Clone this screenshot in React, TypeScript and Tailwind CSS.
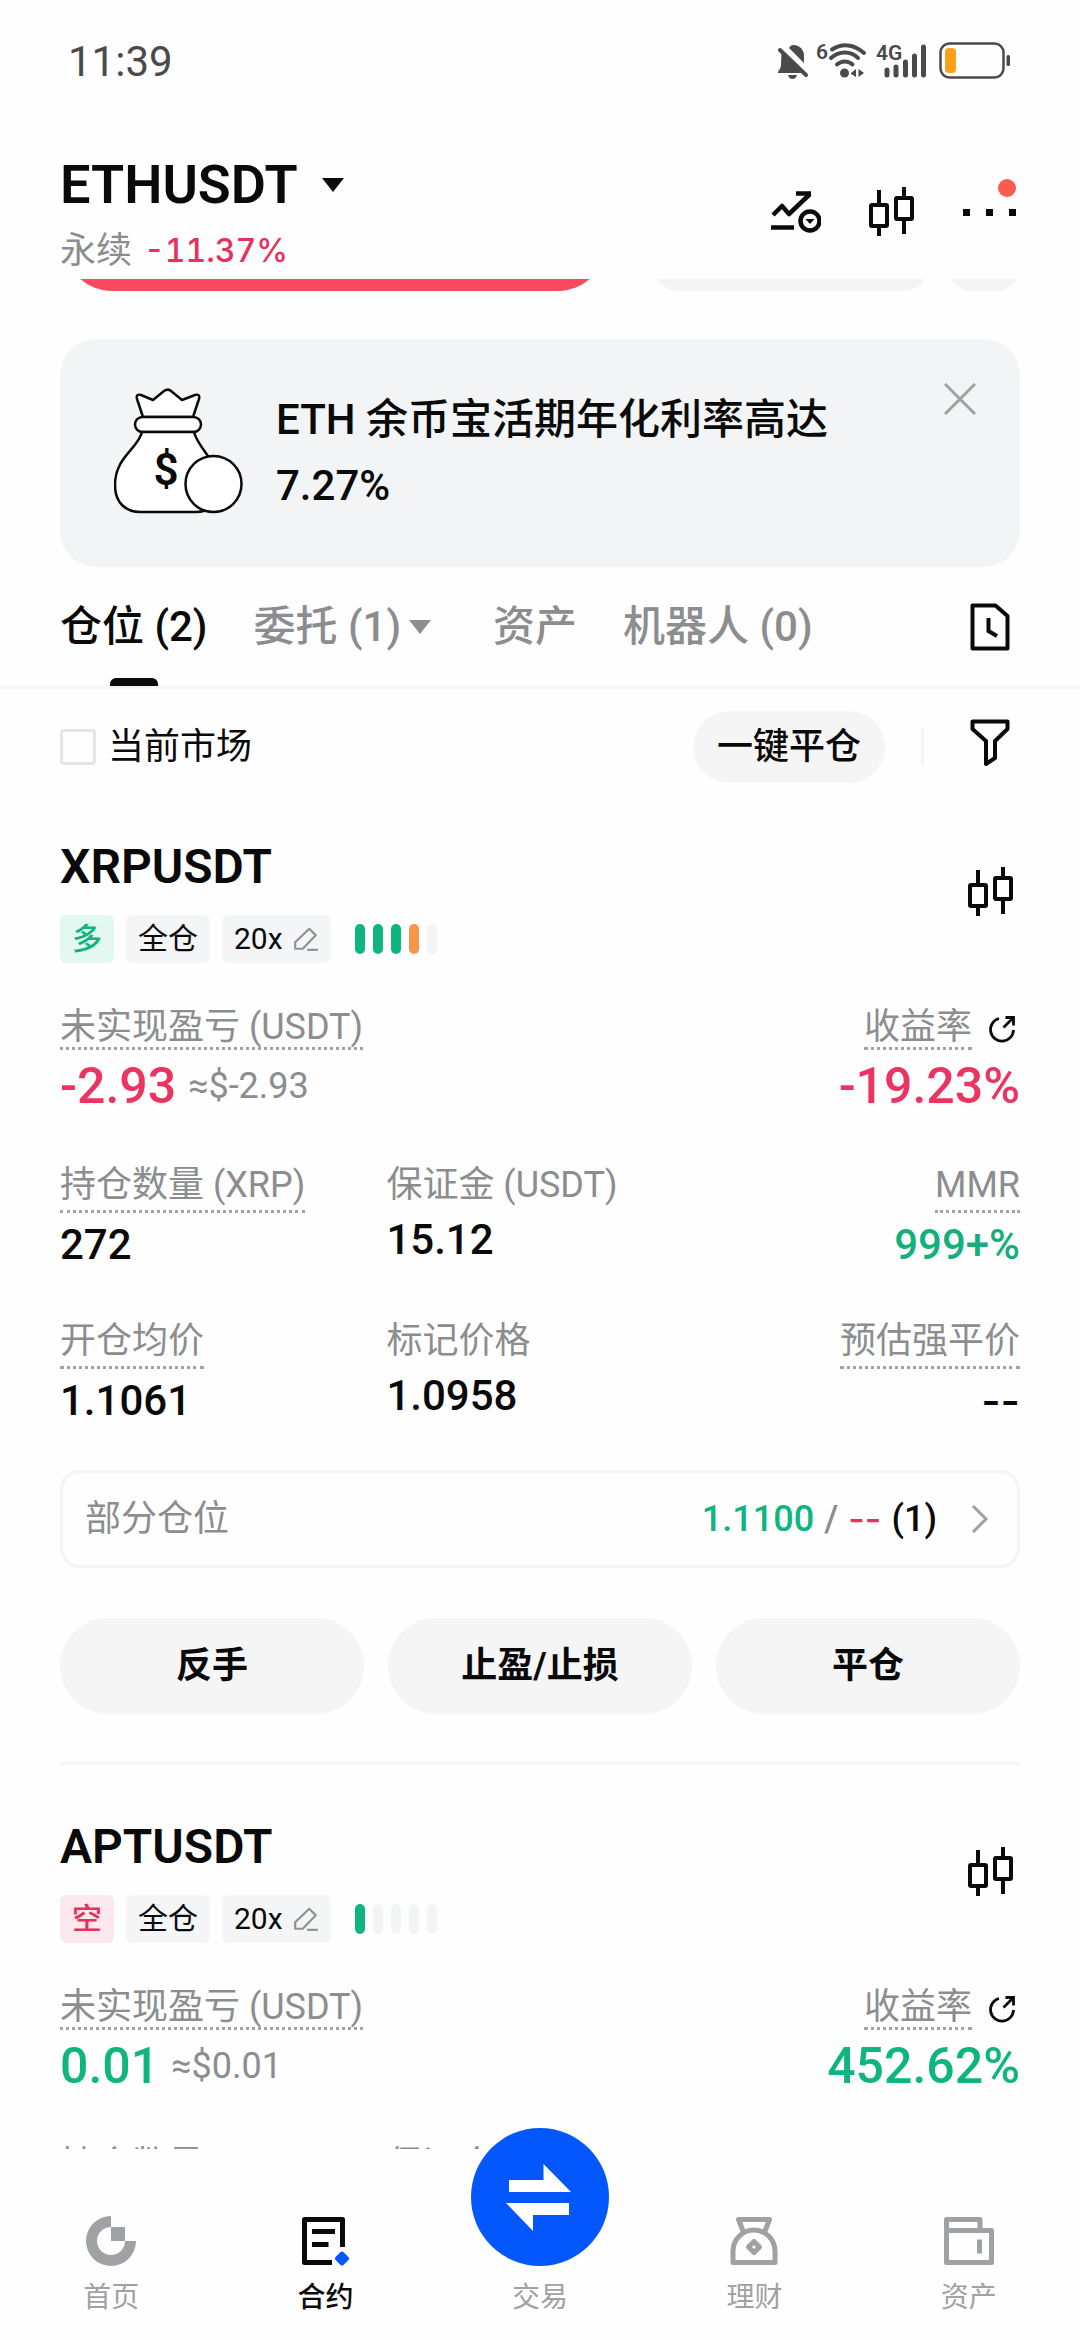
import type { ReactNode } from 'react';

interface Field {
  label: string;
  value: string;
  underlined?: boolean;
  valueClass?: string;
}

interface Position {
  symbol: string;
  side: '多' | '空';
  risk: string[];
  pnl: string;
  pnlUsd: string;
  roe: string;
  up: boolean;
  fields: Field[];
}

const positions: Position[] = [
  {
    symbol: 'XRPUSDT',
    side: '多',
    risk: ['bg-[#0fb57e]', 'bg-[#0fb57e]', 'bg-[#0fb57e]', 'bg-[#f79548]', 'bg-[#f3f4f5]'],
    pnl: '-2.93',
    pnlUsd: '≈$-2.93',
    roe: '-19.23%',
    up: false,
    fields: [
      { label: '持仓数量 (XRP)', value: '272', underlined: true },
      { label: '保证金 (USDT)', value: '15.12' },
      { label: 'MMR', value: '999+%', underlined: true, valueClass: 'text-[#13b07c]' },
      { label: '开仓均价', value: '1.1061', underlined: true },
      { label: '标记价格', value: '1.0958' },
      { label: '预估强平价', value: '--', underlined: true, valueClass: "font-['Inter',sans-serif]" },
    ],
  },
  {
    symbol: 'APTUSDT',
    side: '空',
    risk: ['bg-[#0fb57e]', 'bg-[#f3f4f5]', 'bg-[#f3f4f5]', 'bg-[#f3f4f5]', 'bg-[#f3f4f5]'],
    pnl: '0.01',
    pnlUsd: '≈$0.01',
    roe: '452.62%',
    up: true,
    fields: [
      { label: '持仓数量', value: '1', underlined: true },
      { label: '保证金', value: '0.01' },
    ],
  },
];

/* ---------- icons ---------- */

function CandleIcon() {
  return (
    <svg width="46" height="50" viewBox="0 0 46 50" fill="none" stroke="currentColor" strokeWidth="4">
      <rect x="2" y="18" width="16" height="21" rx="1" />
      <path d="M10 3V18M10 39V49" />
      <rect x="27" y="11" width="16" height="21" rx="1" />
      <path d="M35 0V11M35 32V47" />
    </svg>
  );
}

function TrendIcon() {
  return (
    <svg width="50" height="42" viewBox="0 0 50 42" fill="none" stroke="currentColor" strokeWidth="4.500">
      <path d="M2 24L11 15L18 23L39 3" strokeLinejoin="round" />
      <path d="M25 2.5H40" />
      <path d="M0 36.5H23" />
      <circle cx="39" cy="30" r="9.5" />
      <path d="M34.5 28H43.5L39 33Z" fill="currentColor" stroke="none" />
    </svg>
  );
}

function CaretIcon() {
  return (
    <svg width="22" height="16" viewBox="0 0 22 16" fill="currentColor">
      <path d="M0 1H22L11 15Z" />
    </svg>
  );
}

function BagIllustration() {
  return (
    <svg width="130" height="128" viewBox="0 0 130 128" fill="#fff" stroke="#0a0a0a" strokeWidth="2.5" strokeLinejoin="round">
      <path d="M29 30L23 12C22 8 24 7 27 8L39 13L50 4C53 2 55 2 57 4L68 13L81 8C84 7 86 8 85 12L79 30Z" />
      <rect x="21" y="30" width="66" height="15" rx="7.5" />
      <path d="M28 45C24 62 1 70 1 98C1 116 12 125 26 125H82C94 125 106 118 106 98C106 76 84 62 80 45Z" />
      <circle cx="99.500" cy="97" r="28" />
      <text x="52" y="98" textAnchor="middle" fontSize="44" fontWeight="600" fill="#0a0a0a" stroke="none" fontFamily="Roboto, sans-serif">$</text>
    </svg>
  );
}

function HistoryIcon() {
  return (
    <svg width="40" height="48" viewBox="0 0 40 48" fill="none" stroke="currentColor" strokeWidth="4" strokeLinejoin="round">
      <path d="M2.500 2.500H25.500L37.500 13V45.500H2.500Z" />
      <path d="M18.500 15V28L27 33" strokeLinejoin="miter" />
    </svg>
  );
}

function FunnelIcon() {
  return (
    <svg width="40" height="48" viewBox="0 0 40 48" fill="none" stroke="currentColor" strokeWidth="4" strokeLinejoin="round">
      <path d="M2.500 2.500H37.500V10L25 22V39L16 45V22L2.500 10Z" />
    </svg>
  );
}

function PencilIcon() {
  return (
    <svg width="26" height="26" viewBox="0 0 24 24" fill="none" stroke="#8f9193" strokeWidth="2" strokeLinejoin="round">
      <path d="M15 2.500L21 8.500L9 21H2V15Z" />
      <path d="M13 22H23" />
    </svg>
  );
}

function ShareIcon() {
  return (
    <svg width="28" height="28" viewBox="0 0 28 28" fill="none" stroke="currentColor" strokeWidth="2.800">
      <path d="M11 3.500A11.500 11.500 0 1 0 25.500 15" />
      <path d="M17.500 2.500H25.500V10.500M25 3L15.500 12.500" />
    </svg>
  );
}

function StatusIcons() {
  return (
    <div className="flex items-center gap-[9px] text-[#4a4a4a]">
      <svg width="32" height="38" viewBox="0 0 32 38" fill="currentColor">
        <path d="M12 6C13 4 14.500 3 16.500 3C23 3 27 8 27 14V21Z" />
        <path d="M4.500 10L27 31H1C1 28 4 27 4 23Z" />
        <path d="M3 8L29 33" stroke="currentColor" strokeWidth="4" strokeLinecap="round" />
        <path d="M11 33H20C19 36 17.500 37 15.500 37S12 36 11 33Z" />
      </svg>
      <svg className="overflow-visible" width="50" height="38" viewBox="0 0 50 38" fill="none" stroke="currentColor" strokeWidth="4" strokeLinecap="round">
        <text x="-2" y="17" fontSize="21" fontWeight="600" fill="currentColor" stroke="none" fontFamily="Roboto, sans-serif">6</text>
        <path d="M14 7.500C24 1 36 2 46 11" />
        <path d="M13 16C21 8.500 33 8.500 40 16" />
        <path d="M19 22.500C23.500 18.500 30 18.500 34.500 22.500" />
        <circle cx="26.500" cy="31" r="4.500" fill="currentColor" stroke="none" />
        <path d="M38 27V35L32.500 31.500ZM40.500 35V27L46 31Z" fill="currentColor" stroke="none" />
      </svg>
      <svg className="overflow-visible" width="50" height="38" viewBox="0 0 50 38" fill="none" stroke="currentColor" strokeWidth="5" strokeLinecap="round">
        <text x="-1" y="18" fontSize="21" fontWeight="600" fill="currentColor" stroke="none" fontFamily="Roboto, sans-serif">4G</text>
        <path d="M10 28V33M19 25V33M28.500 20V33M37.500 14V33M46.500 5V33" />
      </svg>
      <svg width="74" height="40" viewBox="0 0 74 40" fill="none">
        <rect x="4.500" y="2.500" width="63" height="34" rx="9" stroke="currentColor" strokeWidth="2.500" />
        <rect x="9" y="7" width="11" height="25" rx="4" fill="#ff9f1a" />
        <rect x="70.500" y="14" width="3.500" height="11" rx="1.500" fill="currentColor" />
      </svg>
    </div>
  );
}

function HomeIcon() {
  return (
    <svg width="50" height="50" viewBox="0 0 50 50" fill="currentColor">
      <path d="M25 0A25 25 0 1 0 50 25H39A14 14 0 1 1 25 11Z" />
      <rect x="25" y="11" width="14" height="14" />
    </svg>
  );
}

function ContractIcon() {
  return (
    <svg width="50" height="50" viewBox="0 0 50 50" fill="none" stroke="currentColor" strokeWidth="5" strokeLinejoin="round">
      <path d="M31 46.500H3.500V3.500H41.500V31" />
      <path d="M11 15.500H34M11 28.500H27.500" />
      <path d="M41 37.500L46 42.500L41 47.500L36 42.500Z" fill="#0457fd" stroke="#0457fd" strokeWidth="4" />
    </svg>
  );
}

function EarnIcon() {
  return (
    <svg width="50" height="50" viewBox="0 0 50 50" fill="none" stroke="currentColor" strokeWidth="5" strokeLinejoin="round">
      <path d="M14 15L9.500 3.500H40.500L36 15" />
      <path d="M4 46.500V35A21 21 0 0 1 46 35V46.500Z" />
      <path d="M25 25.500L30.500 31L25 36.500L19.500 31Z" />
    </svg>
  );
}

function WalletIcon() {
  return (
    <svg width="50" height="50" viewBox="0 0 50 50" fill="none" stroke="currentColor" strokeWidth="5" strokeLinejoin="round">
      <path d="M2.500 14.500H47.500V46.500H2.500Z" />
      <path d="M2.500 14.500V3.500H36V14.500" />
      <path d="M35.500 23.500V37.500" />
    </svg>
  );
}

/* ---------- pieces ---------- */

function Stat({ label, value, underlined, valueClass = '', end }: Field & { end: boolean }) {
  return (
    <div className={`flex flex-col ${end ? 'items-end' : 'items-start'}`}>
      <span
        className={
          underlined
            ? 'border-b-[3px] border-dotted border-[#a0a2a4] pb-[5px] text-4xl leading-10 text-[#8b8d8f]'
            : 'pb-[3px] text-4xl leading-10 text-[#8b8d8f]'
        }
      >
        {label}
      </span>
      <span className={`mt-2 text-[42px] leading-12 font-medium ${valueClass}`}>{value}</span>
    </div>
  );
}

function PositionCard({ position, children }: { position: Position; children?: ReactNode }) {
  const tone = position.up ? 'text-[#0fb57e]' : 'text-[#ec3460]';
  const sideClass = position.side === '多' ? 'bg-[#e2f8f0] text-[#0fb57e]' : 'bg-[#fde8ed] text-[#e8305c]';

  return (
    <section className="px-15 pt-13">
      <div className="flex items-center justify-between">
        <div>
          <h2 className="text-5xl leading-[60px] font-semibold">{position.symbol}</h2>
          <div className="mt-[18px] flex items-center gap-3 text-[30px] leading-12">
            <span className={`rounded-md px-3 font-medium ${sideClass}`}>{position.side}</span>
            <span className="rounded-md bg-[#f4f5f6] px-3">全仓</span>
            <button className="flex items-center gap-[10px] rounded-md bg-[#f4f5f6] px-3">
              20x <PencilIcon />
            </button>
            <div className="ml-3 flex gap-2">
              {position.risk.map((color, i) => (
                <span key={i} className={`h-[30px] w-[10px] rounded-full ${color}`} />
              ))}
            </div>
          </div>
        </div>
        <button className="mr-[6px] pb-4">
          <CandleIcon />
        </button>
      </div>

      <div className="mt-11 flex justify-between">
        <div className="flex flex-col items-start">
          <span className="border-b-[3px] border-dotted border-[#a0a2a4] text-4xl leading-10 text-[#8b8d8f]">未实现盈亏 (USDT)</span>
          <div className="mt-[6px] flex items-center gap-3 leading-[60px]">
            <span className={`text-[50px] font-medium ${tone}`}>{position.pnl}</span>
            <span className="text-4xl leading-[60px] text-[#8b8d8f]">{position.pnlUsd}</span>
          </div>
        </div>
        <div className="flex flex-col items-end">
          <div className="flex items-center gap-4">
            <span className="border-b-[3px] border-dotted border-[#a0a2a4] text-4xl leading-10 text-[#8b8d8f]">收益率</span>
            <button className="mr-1">
              <ShareIcon />
            </button>
          </div>
          <span className={`mt-[6px] text-[50px] leading-[60px] font-medium ${tone}`}>{position.roe}</span>
        </div>
      </div>

      <div className="mt-[49px] grid grid-cols-[34fr_33fr_33fr] gap-y-13">
        {position.fields.map((field, i) => (
          <Stat key={field.label} {...field} end={i % 3 === 2} />
        ))}
      </div>
      {children}
    </section>
  );
}

function NavItem({ icon, label, active }: { icon: ReactNode; label: string; active?: boolean }) {
  return (
    <button
      className={`flex flex-1 flex-col items-center justify-end gap-4 text-[28px] leading-8 ${
        active ? 'font-medium text-[#0a0a0a]' : 'text-[#9fa1a4]'
      }`}
    >
      {icon}
      {label}
    </button>
  );
}

export default function App() {
  return (
    <div className="flex h-screen flex-col bg-[#fefefe] font-['Roboto','Noto_Sans_CJK_SC',sans-serif] text-[#0a0a0a]">
      <header className="shrink-0 pb-1">
        <div className="flex h-[122px] items-center justify-between pr-[70px] pl-[68px]">
          <span className="text-[42px] text-[#4a4a4a]">11:39</span>
          <StatusIcons />
        </div>
        <div className="mt-[31px] flex items-center justify-between px-15">
          <div>
            <button className="flex items-center gap-6 text-[54px] leading-16 font-semibold">
              ETHUSDT
              <CaretIcon />
            </button>
            <p className="mt-[10px] flex items-center gap-3 text-4xl leading-12 text-[#8b8d8f]">
              永续
              <span className="font-['Inter',sans-serif] text-[32px] font-medium text-[#e8305c] tabular-nums">-11.37%</span>
            </p>
          </div>
          <div className="flex items-center gap-12 pb-1">
            <button>
              <TrendIcon />
            </button>
            <button>
              <CandleIcon />
            </button>
            <button className="relative flex gap-4 pr-1">
              <span className="size-[7px] bg-current" />
              <span className="size-[7px] bg-current" />
              <span className="size-[7px] bg-current" />
              <span className="absolute -top-[30px] right-1 size-[18px] rounded-full bg-[#f75d50]" />
            </button>
          </div>
        </div>
      </header>

      <main className="min-h-0 flex-1 overflow-hidden">
        {/* order form, scrolled almost out of view */}
        <div className="-mt-21 flex px-15">
          <div className="ml-1 h-24 flex-1 rounded-full bg-[#f9495f]" />
          <div className="ml-12 h-24 w-[274px] rounded-3xl bg-[#f3f4f5]" />
          <div className="ml-5 h-24 w-[72px] rounded-3xl bg-[#f3f4f5]" />
        </div>

        <div className="mx-15 mt-12 flex items-start rounded-[36px] bg-[#f2f4f5] py-12 pr-11 pl-[54px]">
          <BagIllustration />
          <p className="ml-8 flex-1 pr-20 text-[42px] leading-[66px] font-medium">
            ETH 余币宝活期年化利率高达
            <br />
            7.27%
          </p>
          <button className="-mt-1">
            <svg width="32" height="32" viewBox="0 0 32 32" stroke="#9fa1a4" strokeWidth="3">
              <path d="M1 1L31 31M31 1L1 31" />
            </svg>
          </button>
        </div>

        <div className="flex h-[122px] justify-between border-b-[3px] border-[#f4f5f6] px-15">
          <nav className="flex gap-[46px] text-[42px] font-medium text-[#8b8d8f]">
            <button className="relative text-[#0a0a0a]">
              仓位 (2)
              <span className="absolute bottom-0 left-1/2 h-2 w-12 -translate-x-1/2 rounded-t-md bg-[#0a0a0a]" />
            </button>
            <button className="flex items-center gap-2 pr-4">
              委托 (1)
              <CaretIcon />
            </button>
            <button>资产</button>
            <button>机器人 (0)</button>
          </nav>
          <button className="mr-[10px]">
            <HistoryIcon />
          </button>
        </div>

        <div className="flex items-center justify-between px-15 pt-[22px] pb-0.5">
          <label className="flex items-center gap-3 text-4xl">
            <input type="checkbox" className="size-9 appearance-none rounded-sm border-[3px] border-[#e4e5e6]" />
            当前市场
          </label>
          <div className="flex items-center">
            <button className="h-18 rounded-full bg-[#f5f5f5] px-6 text-4xl font-medium">一键平仓</button>
            <span className="mr-[46px] ml-9 h-9 w-[3px] bg-[#f3f4f5]" />
            <button className="mr-[10px] pb-2">
              <FunnelIcon />
            </button>
          </div>
        </div>

        <PositionCard position={positions[0]}>
          <button className="mt-[45px] flex h-[98px] w-full items-center justify-between rounded-[20px] border-[3px] border-[#f3f4f5] pr-7 pl-[22px] text-4xl">
            <span className="text-[#8b8d8f]">部分仓位</span>
            <span className="flex items-center gap-[10px] font-medium">
              <span className="text-[#0fb57e]">1.1100</span>
              <span className="text-[#8b8d8f]">/</span>
              <span className="font-['Inter',sans-serif] text-[#e8305c]">--</span>
              <span>(1)</span>
              <svg className="ml-6" width="18" height="28" viewBox="0 0 18 28" fill="none" stroke="#9fa1a4" strokeWidth="3">
                <path d="M2 1L15 14L2 27" />
              </svg>
            </span>
          </button>
          <div className="mt-[50px] grid grid-cols-3 gap-6 border-b-[3px] border-[#f4f5f6] pb-12 text-4xl font-bold">
            <button className="h-24 rounded-full bg-[#f5f5f5]">反手</button>
            <button className="h-24 rounded-full bg-[#f5f5f5]">止盈/止损</button>
            <button className="h-24 rounded-full bg-[#f5f5f5]">平仓</button>
          </div>
        </PositionCard>

        <PositionCard position={positions[1]} />
      </main>

      <nav className="relative flex h-[191px] shrink-0 bg-[#fefefe] px-1 pb-[26px]">
        <NavItem icon={<HomeIcon />} label="首页" />
        <NavItem icon={<ContractIcon />} label="合约" active />
        <NavItem
          icon={
            <svg className="shrink-0" width="138" height="138" viewBox="0 0 138 138">
              <circle cx="69" cy="69" r="69" fill="#0457fd" />
              <path d="M38 52H72.500V36L100 64H38ZM98 75H35L62 103V87H98Z" fill="#fff" />
            </svg>
          }
          label="交易"
        />
        <NavItem icon={<EarnIcon />} label="理财" />
        <NavItem icon={<WalletIcon />} label="资产" />
      </nav>
    </div>
  );
}
